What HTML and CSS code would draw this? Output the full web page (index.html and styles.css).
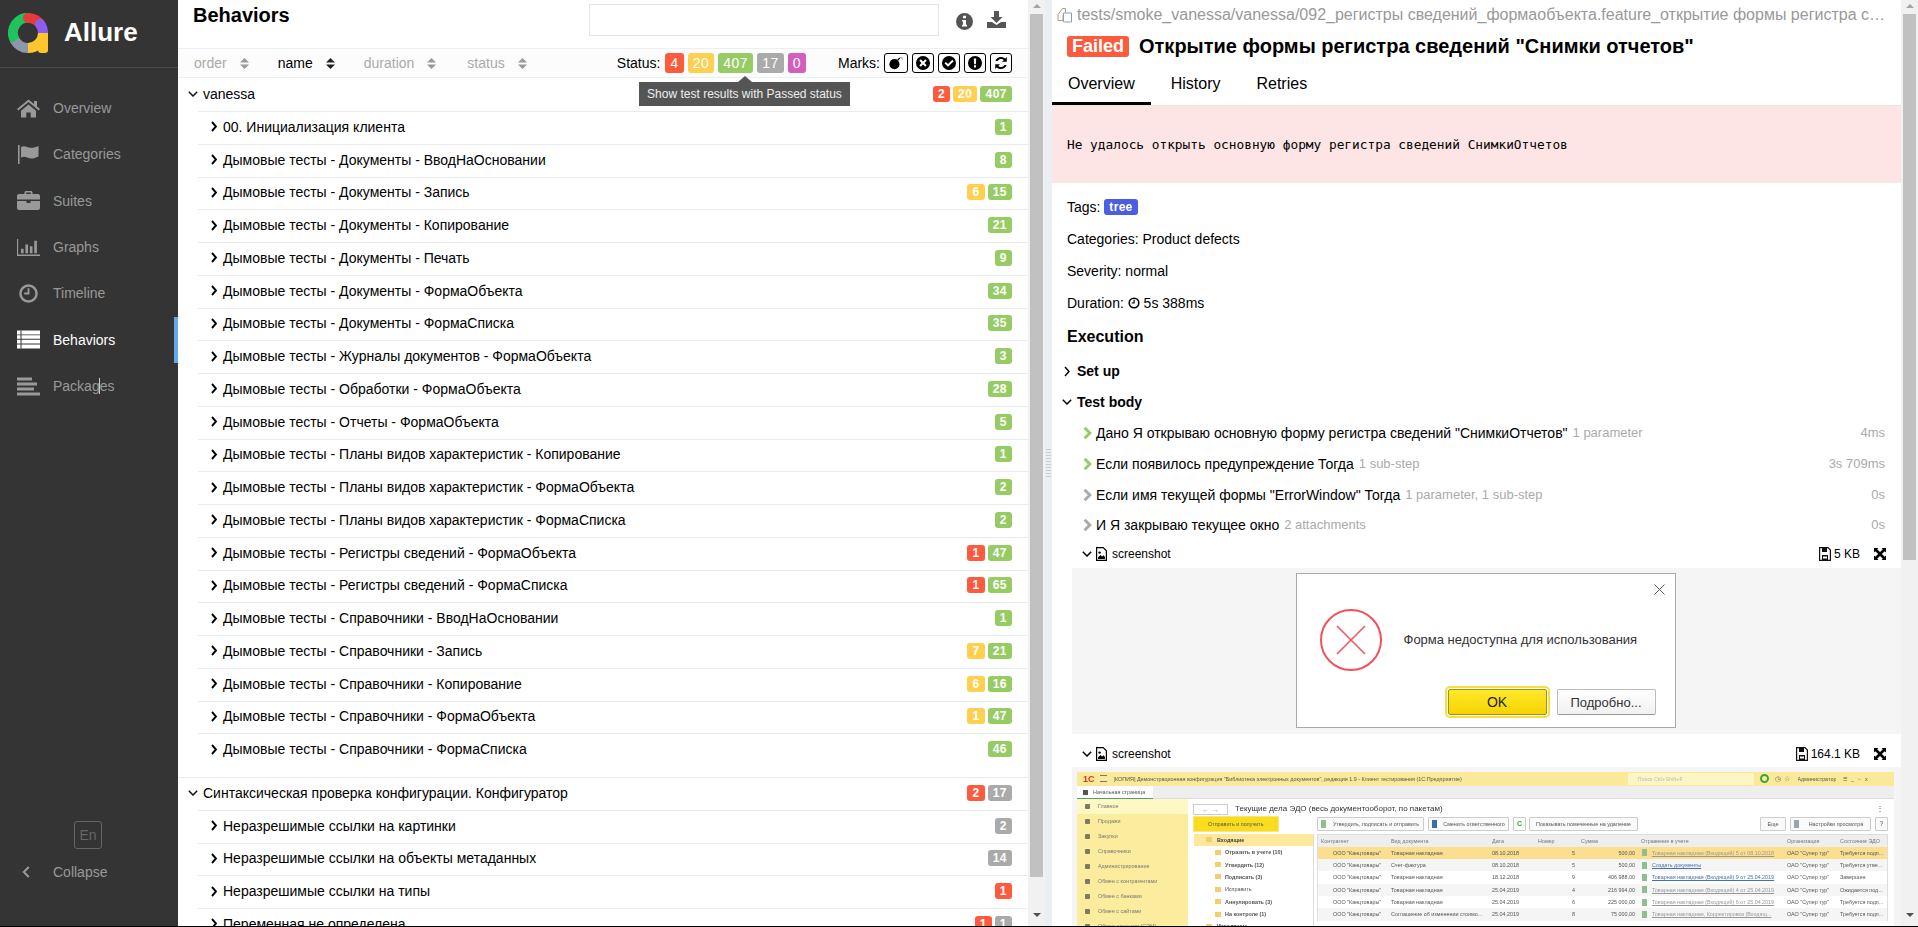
FILE: index.html
```html
<!doctype html>
<html>
<head>
    <meta charset="utf-8">
    <title>Allure Report - Behaviors</title>
    <link rel="stylesheet" href="styles.css">
</head>
<body>
<svg class="defs">
    <symbol id="ch-r" viewBox="0 0 6 11"><path d="M1 1l4 4.5L1 10" fill="none" stroke="currentColor"/></symbol>
    <symbol id="ch-d" viewBox="0 0 10 6"><path d="M.8 .8L5 5l4.2-4.2" fill="none" stroke="currentColor" stroke-width="1.5"/></symbol>
    <symbol id="step" viewBox="0 0 9 12"><path d="M1.6 .8L6.8 6l-5.2 5.2" fill="none" stroke="currentColor" stroke-width="3"/></symbol>
    <symbol id="sort" viewBox="0 0 9 11"><path d="M4.5 0L9 4.4H0zM0 6.6h9L4.5 11z"/></symbol>
    <symbol id="file-img" viewBox="0 0 11 14"><path d="M.6 .6h6.6l3.2 3.2v9.6H.6z" fill="#fff" stroke="#000" stroke-width="1.2"/><path d="M2 12v-1.5l2.4-2.6 1.6 1.6 1.6-1.2L9 10v2z"/><circle cx="3.6" cy="5.6" r="1.2"/></symbol>
    <symbol id="save" viewBox="0 0 12 14"><path d="M.6 .6h8.4l2.4 2.4v10.4H.6z" fill="#fff" stroke="#111" stroke-width="1.2"/><path d="M3 1h5v4H3zM3 8h6v5H3z" fill="#111"/><path d="M4 9.500h4v2H4z" fill="#fff"/></symbol>
    <symbol id="expand" viewBox="0 0 12 12"><path d="M0 0h4.500L3.200 1.300 6 4.100 8.800 1.300 7.500 0H12v4.500L10.700 3.200 7.900 6l2.800 2.800L12 7.500V12H7.500l1.300-1.300L6 7.900l-2.800 2.800L4.500 12H0V7.500l1.300 1.300L4.100 6 1.300 3.200 0 4.500z"/></symbol>
</svg>

<div class="app">
    <nav class="side">
        <div class="brand">
            <svg class="logo" viewBox="0 0 40 40" fill="none" stroke-width="10">
                <path d="M20 35A15 15 0 0 1 7 27.500" stroke="#8d97aa" stroke-linecap="round"/>
                <path d="M7 27.500A15 15 0 0 1 22 5" stroke="#1fc25c"/>
                <path d="M20 5A15 15 0 0 1 33 12.500" stroke="#e53b3b" stroke-linecap="round"/>
                <path d="M32 11A15 15 0 0 1 35 20" stroke="#8e5cf0" stroke-linecap="round"/>
                <path d="M35 20A15 15 0 0 1 20 35" stroke="#ffc52c"/>
                <rect x="30" y="20" width="10" height="20" rx="3" fill="#ffc52c"/>
            </svg>
            <span class="brand-name">Allure</span>
        </div>
        <ul class="menu">
            <li class="menu-item">
                <svg class="menu-icon" viewBox="0 0 23 18"><path d="M11.500 0L17 4.500V1.500h3v5.500l3 2.600-1.300 1.400-10.200-8.600L1.300 11 0 9.600z"/><path d="M4 11.200l7.500-6.300 7.500 6.300V18h-5.300v-5h-4.400v5H4z"/></svg>
                Overview
            </li>
            <li class="menu-item">
                <svg class="menu-icon" viewBox="0 0 23 19"><path d="M1 0h1.600v19H1z"/><path d="M4 2c4-2.200 6 .6 9.500 .8 3 .2 5-.6 8-1.800v10.500c-3 1.400-5 2.200-8 2-3.500-.2-5.500-3-9.500-.8z"/></svg>
                Categories
            </li>
            <li class="menu-item">
                <svg class="menu-icon" viewBox="0 0 23 19"><path d="M7.500 3V1.500C7.500.6 8.100 0 9 0h5c.9 0 1.500.6 1.500 1.500V3H21c1.100 0 2 .9 2 2v3.600H0V5c0-1.100.9-2 2-2zm1.700 0h4.600V1.600H9.200z"/><path d="M0 10h9.500v2h4v-2H23v7c0 1.100-.9 2-2 2H2c-1.100 0-2-.9-2-2z"/></svg>
                Suites
            </li>
            <li class="menu-item">
                <svg class="menu-icon" viewBox="0 0 26 19"><path d="M0 0h1.300v17.500H26V19H0z"/><path d="M4.500 11h3v5h-3zM9.500 6h3v10h-3zM14.500 8h3v8h-3zM19.500 2h3v14h-3z"/></svg>
                Graphs
            </li>
            <li class="menu-item">
                <svg class="menu-icon" viewBox="0 0 20 20"><circle cx="10" cy="10" r="8.500" fill="none" stroke="currentColor" stroke-width="2.600"/><path d="M9 4.500h2V11H5.500V9H9z"/></svg>
                Timeline
            </li>
            <li class="menu-item menu-item-active">
                <svg class="menu-icon" viewBox="0 0 23 18"><path d="M0 0h23v4H0zM0 4.800h23v3.500H0zM0 9.200h23v3.800H0zM0 14h23v4H0z"/><path d="M3.500 0h1v18h-1z" fill="#343434"/></svg>
                Behaviors
            </li>
            <li class="menu-item">
                <svg class="menu-icon" viewBox="0 0 23 18"><path d="M0 0h15v3H0zM0 5h20v3H0zM0 10h17v3H0zM0 15h23v3H0z"/></svg>
                Packages
            </li>
        </ul>
        <span class="ibeam"></span>
        <div class="side-foot">
            <span class="lang">En</span>
            <div class="collapse">
                <svg class="collapse-arrow" viewBox="0 0 8 12"><path d="M6.800 1L1.800 6l5 5" fill="none" stroke="currentColor" stroke-width="2"/></svg>
                Collapse
            </div>
        </div>
    </nav>

    <section class="left">
        <header class="left-head">
            <h2 class="left-title">Behaviors</h2>
            <div class="search"></div>
            <svg class="info" viewBox="0 0 17 17"><path fill-rule="evenodd" d="M8.500 0a8.500 8.500 0 1 1 0 17 8.500 8.500 0 0 1 0-17zM7 2.800v2.400h3V2.800zM6 7v1.600h1v3.200H6v1.800h5v-1.800h-1V7z"/></svg>
            <svg class="download" viewBox="0 0 19 17"><path d="M7 0h5v6h3.500l-6 6-6-6H7z"/><path d="M0 11h5l4.500 3 4.500-3h5v6H0z"/></svg>
        </header>
        <div class="toolbar">
            <span class="sort">order<svg><use href="#sort"/></svg></span>
            <span class="sort sort-on">name<svg><use href="#sort"/></svg></span>
            <span class="sort">duration<svg><use href="#sort"/></svg></span>
            <span class="sort sort-last">status<svg><use href="#sort"/></svg></span>
            <div class="filters">
                <span>Status:</span>
                <span class="pill red">4</span>
                <span class="pill yellow">20</span>
                <span class="pill green">407</span>
                <span class="pill gray">17</span>
                <span class="pill pink">0</span>
                <span class="marks-label">Marks:</span>
                <span class="mark mark-wide"><svg viewBox="0 0 18 16"><circle cx="7" cy="9.500" r="6.500"/><path d="M11 4.500l3-3" stroke="#000" stroke-width="1.500"/><path d="M14 1h3v3" fill="none" stroke="#999"/></svg></span>
                <span class="mark"><svg viewBox="0 0 14 14"><path fill-rule="evenodd" d="M7 0a7 7 0 1 1 0 14A7 7 0 0 1 7 0zM4.800 3.300L3.300 4.800 5.500 7 3.300 9.200l1.500 1.500L7 8.500l2.200 2.200 1.500-1.500L8.500 7l2.200-2.200-1.500-1.500L7 5.500z"/></svg></span>
                <span class="mark"><svg viewBox="0 0 14 14"><path fill-rule="evenodd" d="M7 0a7 7 0 1 1 0 14A7 7 0 0 1 7 0zM10.300 3.800L6 8 3.900 5.900 2.500 7.300 6 10.800l5.700-5.600z"/></svg></span>
                <span class="mark"><svg viewBox="0 0 14 14"><path fill-rule="evenodd" d="M7 0a7 7 0 1 1 0 14A7 7 0 0 1 7 0zM5.800 2.500l.3 5.700h1.800l.3-5.700zM6 9.300v2.200h2V9.300z"/></svg></span>
                <span class="mark"><svg viewBox="0 0 14 14"><path d="M12.800 1v4.800H8l1.800-1.800C8 2.400 5 2.600 3.600 5L1.400 5C2.800.8 7.900-.4 11.200 2.600z"/><path d="M1.200 13V8.200H6L4.200 10c1.800 1.600 4.800 1.400 6.200-1l2.200 0c-1.400 4.200-6.500 5.400-9.800 2.400z"/></svg></span>
            </div>
            <div class="tip">Show test results with Passed status</div>
        </div>

        <div class="tree">
            <div class="group">
                <svg class="group-arrow"><use href="#ch-d"/></svg>
                <span class="name">vanessa</span>
                <span class="count red">2</span><span class="count yellow">20</span><span class="count green">407</span>
            </div>
            <div class="row"><svg class="row-arrow"><use href="#ch-r"/></svg><span class="name">00. Инициализация клиента</span><span class="count green">1</span></div>
            <div class="row"><svg class="row-arrow"><use href="#ch-r"/></svg><span class="name">Дымовые тесты - Документы - ВводНаОсновании</span><span class="count green">8</span></div>
            <div class="row"><svg class="row-arrow"><use href="#ch-r"/></svg><span class="name">Дымовые тесты - Документы - Запись</span><span class="count yellow">6</span><span class="count green">15</span></div>
            <div class="row"><svg class="row-arrow"><use href="#ch-r"/></svg><span class="name">Дымовые тесты - Документы - Копирование</span><span class="count green">21</span></div>
            <div class="row"><svg class="row-arrow"><use href="#ch-r"/></svg><span class="name">Дымовые тесты - Документы - Печать</span><span class="count green">9</span></div>
            <div class="row"><svg class="row-arrow"><use href="#ch-r"/></svg><span class="name">Дымовые тесты - Документы - ФормаОбъекта</span><span class="count green">34</span></div>
            <div class="row"><svg class="row-arrow"><use href="#ch-r"/></svg><span class="name">Дымовые тесты - Документы - ФормаСписка</span><span class="count green">35</span></div>
            <div class="row"><svg class="row-arrow"><use href="#ch-r"/></svg><span class="name">Дымовые тесты - Журналы документов - ФормаОбъекта</span><span class="count green">3</span></div>
            <div class="row"><svg class="row-arrow"><use href="#ch-r"/></svg><span class="name">Дымовые тесты - Обработки - ФормаОбъекта</span><span class="count green">28</span></div>
            <div class="row"><svg class="row-arrow"><use href="#ch-r"/></svg><span class="name">Дымовые тесты - Отчеты - ФормаОбъекта</span><span class="count green">5</span></div>
            <div class="row"><svg class="row-arrow"><use href="#ch-r"/></svg><span class="name">Дымовые тесты - Планы видов характеристик - Копирование</span><span class="count green">1</span></div>
            <div class="row"><svg class="row-arrow"><use href="#ch-r"/></svg><span class="name">Дымовые тесты - Планы видов характеристик - ФормаОбъекта</span><span class="count green">2</span></div>
            <div class="row"><svg class="row-arrow"><use href="#ch-r"/></svg><span class="name">Дымовые тесты - Планы видов характеристик - ФормаСписка</span><span class="count green">2</span></div>
            <div class="row"><svg class="row-arrow"><use href="#ch-r"/></svg><span class="name">Дымовые тесты - Регистры сведений - ФормаОбъекта</span><span class="count red">1</span><span class="count green">47</span></div>
            <div class="row"><svg class="row-arrow"><use href="#ch-r"/></svg><span class="name">Дымовые тесты - Регистры сведений - ФормаСписка</span><span class="count red">1</span><span class="count green">65</span></div>
            <div class="row"><svg class="row-arrow"><use href="#ch-r"/></svg><span class="name">Дымовые тесты - Справочники - ВводНаОсновании</span><span class="count green">1</span></div>
            <div class="row"><svg class="row-arrow"><use href="#ch-r"/></svg><span class="name">Дымовые тесты - Справочники - Запись</span><span class="count yellow">7</span><span class="count green">21</span></div>
            <div class="row"><svg class="row-arrow"><use href="#ch-r"/></svg><span class="name">Дымовые тесты - Справочники - Копирование</span><span class="count yellow">6</span><span class="count green">16</span></div>
            <div class="row"><svg class="row-arrow"><use href="#ch-r"/></svg><span class="name">Дымовые тесты - Справочники - ФормаОбъекта</span><span class="count yellow">1</span><span class="count green">47</span></div>
            <div class="row"><svg class="row-arrow"><use href="#ch-r"/></svg><span class="name">Дымовые тесты - Справочники - ФормаСписка</span><span class="count green">46</span></div>

            <div class="group group-next">
                <svg class="group-arrow"><use href="#ch-d"/></svg>
                <span class="name">Синтаксическая проверка конфигурации. Конфигуратор</span>
                <span class="count red">2</span><span class="count gray">17</span>
            </div>
            <div class="row"><svg class="row-arrow"><use href="#ch-r"/></svg><span class="name">Неразрешимые ссылки на картинки</span><span class="count gray">2</span></div>
            <div class="row"><svg class="row-arrow"><use href="#ch-r"/></svg><span class="name">Неразрешимые ссылки на объекты метаданных</span><span class="count gray">14</span></div>
            <div class="row"><svg class="row-arrow"><use href="#ch-r"/></svg><span class="name">Неразрешимые ссылки на типы</span><span class="count red">1</span></div>
            <div class="row"><svg class="row-arrow"><use href="#ch-r"/></svg><span class="name">Переменная не определена</span><span class="count red">1</span><span class="count gray">1</span></div>
        </div>
    </section>

    <div class="bar bar-left">
        <span class="bar-up"></span>
        <span class="thumb thumb-left"></span>
        <span class="bar-down"></span>
    </div>
    <div class="gutter"><span class="grip"></span></div>

    <section class="right">
        <div class="path">
            <svg class="path-icon" viewBox="0 0 16 16"><path d="M1 7.500L5.500 1.500H8.500V5.500L6 8.500V13.500H1z" fill="none" stroke="#b49a86"/><path d="M6.500 6H14.500V15H6.500z" fill="#fff" stroke="#8f9db5"/></svg>
            <span class="path-text">tests/smoke_vanessa/vanessa/092_регистры сведений_формаобъекта.feature_открытие формы регистра сведений "снимки отчетов"</span>
        </div>
        <div class="title-row">
            <span class="failed">Failed</span>
            <h2 class="title">Открытие формы регистра сведений "Снимки отчетов"</h2>
        </div>
        <div class="tabs">
            <span class="tab tab-on">Overview</span>
            <span class="tab">History</span>
            <span class="tab">Retries</span>
        </div>
        <div class="error">Не удалось открыть основную форму регистра сведений СнимкиОтчетов</div>

        <p class="meta meta-first">Tags: <span class="tag">tree</span></p>
        <p class="meta">Categories: Product defects</p>
        <p class="meta">Severity: normal</p>
        <p class="meta">Duration: <svg class="clock" viewBox="0 0 12 12"><circle cx="6" cy="6" r="4.800" fill="none" stroke="#000" stroke-width="1.600"/><path d="M5.500 2.800h1.200v3.800H3.600V5.500h1.900z"/></svg> 5s 388ms</p>
        <h3 class="exec">Execution</h3>

        <div class="stage"><svg class="stage-r"><use href="#ch-r"/></svg>Set up</div>
        <div class="stage stage-open"><svg class="stage-d"><use href="#ch-d"/></svg>Test body</div>

        <div class="step"><svg class="step-arrow step-ok"><use href="#step"/></svg><span>Дано Я открываю основную форму регистра сведений "СнимкиОтчетов"</span><span class="step-meta">1 parameter</span><span class="step-time">4ms</span></div>
        <div class="step"><svg class="step-arrow step-ok"><use href="#step"/></svg><span>Если появилось предупреждение Тогда</span><span class="step-meta">1 sub-step</span><span class="step-time">3s 709ms</span></div>
        <div class="step"><svg class="step-arrow"><use href="#step"/></svg><span>Если имя текущей формы "ErrorWindow" Тогда</span><span class="step-meta">1 parameter, 1 sub-step</span><span class="step-time">0s</span></div>
        <div class="step"><svg class="step-arrow"><use href="#step"/></svg><span>И Я закрываю текущее окно</span><span class="step-meta">2 attachments</span><span class="step-time">0s</span></div>

        <div class="attach">
            <svg class="attach-arrow"><use href="#ch-d"/></svg>
            <svg class="attach-file"><use href="#file-img"/></svg>
            <span>screenshot</span>
            <svg class="attach-save"><use href="#save"/></svg>
            <span class="attach-size">5 KB</span>
            <svg class="attach-expand"><use href="#expand"/></svg>
        </div>
        <div class="shot">
            <div class="dialog">
                <svg class="dialog-x" viewBox="0 0 11 11"><path d="M.5 .5l10 10M10.500 .5l-10 10" stroke="#555" fill="none"/></svg>
                <div class="dialog-body">
                    <svg class="dialog-err" viewBox="0 0 62 62"><circle cx="31" cy="31" r="30" fill="none" stroke="#f2505c" stroke-width="2"/><path d="M17 17l28 28M45 17L17 45" stroke="#f2505c" stroke-width="1.500"/></svg>
                    <span>Форма недоступна для использования</span>
                </div>
                <div class="dialog-btns">
                    <span class="btn-ok">OK</span>
                    <span class="btn-more">Подробно...</span>
                </div>
            </div>
        </div>

        <div class="attach attach-next">
            <svg class="attach-arrow"><use href="#ch-d"/></svg>
            <svg class="attach-file"><use href="#file-img"/></svg>
            <span>screenshot</span>
            <svg class="attach-save"><use href="#save"/></svg>
            <span class="attach-size">164.1 KB</span>
            <svg class="attach-expand"><use href="#expand"/></svg>
        </div>
        <div class="shot shot-app">
            <div class="app1c">
                <div class="c-top">
                    <b class="c-logo">1С</b>
                    <span class="c-burger"></span>
                    <span class="c-caption">[КОПИЯ] Демонстрационная конфигурация "Библиотека электронных документов", редакция 1.9 - Клиент тестирования (1С:Предприятие)</span>
                    <span class="c-search">Поиск Ctrl+Shift+F</span>
                    <span class="c-dot"></span>
                    <span class="c-glyphs">◷ &nbsp;☆</span>
                    <span class="c-user">Администратор</span>
                    <span class="c-win">☰ &nbsp; _ &nbsp; ▫ &nbsp; x</span>
                </div>
                <div class="c-tabs"><span class="c-tab">Начальная страница</span></div>
                <div class="c-body">
                    <div class="c-side">
                        <div class="c-side-item c-side-on">Главное</div>
                        <div class="c-side-item">Продажи</div>
                        <div class="c-side-item">Закупки</div>
                        <div class="c-side-item">Справочники</div>
                        <div class="c-side-item">Администрирование</div>
                        <div class="c-side-item">Обмен с контрагентами</div>
                        <div class="c-side-item">Обмен с банками</div>
                        <div class="c-side-item">Обмен с сайтами</div>
                        <div class="c-side-item">Обмен данными (СЭМ)</div>
                    </div>
                    <div class="c-main">
                        <div class="c-head">
                            <span class="c-nav">← &nbsp;→</span>
                            <span class="c-title">Текущие дела ЭДО (весь документооборот, по пакетам)</span>
                            <span class="c-more">⋮</span>
                        </div>
                        <div class="c-split">
                            <div class="c-left">
                                <span class="c-send">Отправить и получить</span>
                                <div class="c-folders">
                                    <div class="c-folder c-folder-top c-folder-on">Входящие</div>
                                    <div class="c-folder">Отразить в учете (10)</div>
                                    <div class="c-folder">Утвердить (12)</div>
                                    <div class="c-folder">Подписать (3)</div>
                                    <div class="c-folder c-folder-thin">Исправить</div>
                                    <div class="c-folder">Аннулировать (3)</div>
                                    <div class="c-folder">На контроле (1)</div>
                                    <div class="c-folder c-folder-top">Исходящие</div>
                                </div>
                            </div>
                            <div class="c-right">
                                <div class="c-tools">
                                    <span class="c-tool c-tool-a">Утвердить, подписать и отправить</span>
                                    <span class="c-tool c-tool-b">Сменить ответственного</span>
                                    <span class="c-tool c-tool-c">С</span>
                                    <span class="c-tool c-tool-d">Показывать помеченные на удаление</span>
                                    <span class="c-tool c-tool-e">Еще</span>
                                    <span class="c-tool c-tool-f">Настройки просмотра</span>
                                    <span class="c-tool c-tool-g">?</span>
                                </div>
                                <div class="c-table">
                                    <div class="c-row c-row-head"><span>Контрагент</span><span>Вид документа</span><span>Дата</span><span>Номер</span><span>Сумма</span><span>Отражение в учете</span><span>Организация</span><span>Состояние ЭДО</span></div>
                                    <div class="c-row c-row-on"><span class="c-in">ООО "Канцтовары"</span><span>Товарная накладная</span><span>08.10.2018</span><span class="c-num">5</span><span class="c-num">500,00</span><a>Товарная накладная (Входящий) 5 от 08.10.2018</a><span>ОАО "Супер тур"</span><span>Требуется подп...</span></div>
                                    <div class="c-row c-row-alt"><span class="c-in">ООО "Канцтовары"</span><span>Счет-фактура</span><span>08.10.2018</span><span class="c-num">5</span><span class="c-num">500,00</span><a class="c-blue c-new">Создать документы</a><span>ОАО "Супер тур"</span><span>Требуется утве...</span></div>
                                    <div class="c-row"><span class="c-in">ООО "Канцтовары"</span><span>Товарная накладная</span><span>18.12.2018</span><span class="c-num">9</span><span class="c-num">406 988,00</span><a class="c-blue">Товарная накладная (Входящий) 9 от 25.04.2019</a><span>ОАО "Супер тур"</span><span>Завершен</span></div>
                                    <div class="c-row c-row-alt"><span class="c-in">ООО "Канцтовары"</span><span>Товарная накладная</span><span>25.04.2019</span><span class="c-num">4</span><span class="c-num">216 994,00</span><a>Товарная накладная (Входящий) 4 от 25.04.2019</a><span>ОАО "Супер тур"</span><span>Ожидается под...</span></div>
                                    <div class="c-row"><span class="c-in">ООО "Канцтовары"</span><span>Товарная накладная</span><span>25.04.2019</span><span class="c-num">6</span><span class="c-num">225 000,00</span><a>Товарная накладная (Входящий) 6 от 25.04.2019</a><span>ОАО "Супер тур"</span><span>Требуется подп...</span></div>
                                    <div class="c-row c-row-alt"><span class="c-in">ООО "Канцтовары"</span><span>Соглашение об изменении стоимо...</span><span>25.04.2019</span><span class="c-num">8</span><span class="c-num">75 000,00</span><a>Товарная накладная, Корректировка (Входящ...</a><span>ОАО "Супер тур"</span><span>Требуется подп...</span></div>
                                </div>
                            </div>
                        </div>
                    </div>
                </div>
            </div>
        </div>
    </section>

    <div class="bar bar-right">
        <span class="bar-up"></span>
        <span class="thumb thumb-right"></span>
        <span class="bar-down"></span>
    </div>
</div>
</body>
</html>
```

FILE: styles.css
```css
html, body {
    margin: 0;
    height: 927px;
    overflow: hidden;
    background: #000;
    font-family: "Liberation Sans", Arial, sans-serif;
    font-size: 14px;
    line-height: 20px;
    color: #000;
}
.defs { display: none; }
.app {
    display: flex;
    height: 926px;
    overflow: hidden;
    background: #fff;
}

/* side menu */
.side {
    position: relative;
    flex: none;
    display: flex;
    flex-direction: column;
    width: 178px;
    background: #343434;
    color: #999;
}
.brand {
    display: flex;
    align-items: center;
    height: 68px;
    padding-left: 8px;
    box-sizing: border-box;
    border-bottom: 1px solid #4b4b4b;
}
.logo { width: 40px; height: 40px; margin: -1px 16px 0 0; }
.brand-name { font-size: 26px; font-weight: bold; color: #fff; margin-top: -3px; }
.menu { list-style: none; margin: 17px 0 0; padding: 0; }
.menu-item {
    display: flex;
    align-items: center;
    height: 46.33px;
    padding-left: 17px;
    box-sizing: border-box;
}
.menu-icon { width: 23px; height: 19px; margin-right: 13px; fill: #999; color: #999; }
.menu-item-active { color: #fff; border-right: 4px solid #63aaeb; }
.menu-item-active .menu-icon { fill: #fff; }
.ibeam {
    position: absolute;
    left: 99px;
    top: 378px;
    width: 1px;
    height: 16px;
    background: #ccc;
}
.side-foot { margin-top: auto; padding-bottom: 44px; }
.lang {
    display: block;
    width: 28px;
    height: 28px;
    margin-left: 74px;
    box-sizing: border-box;
    border: 1px solid #666;
    border-radius: 3px;
    color: #666;
    text-align: center;
    line-height: 26px;
}
.collapse { display: flex; align-items: center; margin-top: 13px; padding-left: 22px; }
.collapse-arrow { width: 8px; height: 12px; margin-right: 23px; }

/* behaviors pane */
.left { flex: none; width: 850px; overflow: hidden; }
.left-head { display: flex; height: 48px; box-sizing: border-box; padding: 4px 22px 0 15px; }
.left-title { margin: -4px 0 0; font-size: 20px; line-height: 30px; font-weight: bold; }
.search {
    width: 350px;
    height: 32px;
    margin-left: auto;
    box-sizing: border-box;
    border: 1px solid #e3e6e8;
}
.info { width: 17px; height: 17px; margin: 9px 0 0 17px; fill: #555; }
.download { width: 19px; height: 17px; margin: 7px 0 0 14px; fill: #555; }

.toolbar {
    position: relative;
    display: flex;
    align-items: center;
    height: 30px;
    box-sizing: border-box;
    padding-left: 16px;
    background: #fcfcfc;
    border-top: 1px solid #eceff2;
    border-bottom: 1px solid #eceff2;
}
.sort { display: flex; align-items: center; margin-right: 29px; color: #aaa; }
.sort svg { width: 9px; height: 11px; margin-left: 13px; fill: #999; }
.sort-on { color: #000; }
.sort-on svg { fill: #222; }
.sort-last { margin-left: 2px; }
.filters { display: flex; align-items: center; margin-left: auto; padding-right: 16px; }
.pill {
    height: 20px;
    margin-left: 4px;
    padding: 0 5px;
    border-radius: 3px;
    color: #fff;
    letter-spacing: .5px;
    line-height: 20px;
}
.filters .red { margin-left: 5px; }
.marks-label { margin: 0 4px 0 32px; }
.mark {
    display: flex;
    align-items: center;
    justify-content: center;
    width: 22px;
    height: 20px;
    margin-left: 4px;
    box-sizing: border-box;
    border: 1px solid #000;
    border-radius: 3px;
}
.mark-wide { width: 24px; margin-left: 0; }
.mark svg { width: 14px; height: 14px; }
.tip {
    position: absolute;
    left: 461px;
    top: 33px;
    width: 211px;
    height: 24px;
    background: #555;
    color: #eee;
    font-size: 12px;
    line-height: 24px;
    text-align: center;
}
.tip::before {
    content: "";
    position: absolute;
    left: 99px;
    top: -6px;
    border-left: 7px solid transparent;
    border-right: 7px solid transparent;
    border-bottom: 6px solid #555;
}
.red { background: #fd5a3e; }
.yellow { background: #ffd050; }
.green { background: #97cc64; }
.gray { background: #aaa; }
.pink { background: #d35ebe; }

.group, .row { display: flex; align-items: center; box-sizing: border-box; padding-right: 16px; padding-bottom: 2px; }
.group { height: 33px; padding-left: 10px; }
.group-next { height: 32.75px; margin-top: 11px; border-top: 1px solid #e9ecef; }
.group-arrow { width: 10px; height: 6px; margin-right: 5px; color: #111; }
.row {
    height: 32.75px;
    margin-left: 20px;
    padding-left: 13px;
    border-top: 1px solid #e9ecef;
}
.row-arrow { width: 6px; height: 11px; margin-right: 6px; color: #000; stroke-width: 1.9; }
.name { margin-right: auto; }
.count {
    height: 16px;
    margin-left: 3px;
    padding: 0 5px;
    border-radius: 3px;
    color: #fff;
    font-size: 12px;
    font-weight: bold;
    letter-spacing: .5px;
    line-height: 16px;
}

/* scroll bars */
.bar {
    flex: none;
    display: flex;
    flex-direction: column;
    align-items: center;
    width: 17px;
    background: #f1f1f1;
}
.bar-up, .bar-down { flex: none; height: 14px; width: 0; position: relative; }
.bar-up::after, .bar-down::after {
    content: "";
    position: absolute;
    left: -4px;
    border-left: 4px solid transparent;
    border-right: 4px solid transparent;
}
.bar-up::after { top: 4px; border-bottom: 4px solid #a3a3a3; }
.bar-down::after { top: 3px; border-top: 4px solid #505050; }
.bar-down { margin-top: auto; margin-bottom: 2px; }
.thumb { flex: none; width: 13px; background: #c1c1c1; }
.thumb-left { height: 863px; }
.thumb-right { height: 546px; }
.gutter {
    flex: none;
    display: flex;
    align-items: center;
    justify-content: center;
    width: 7px;
    background: #ebeff3;
}
.grip {
    width: 5px;
    height: 30px;
    background: radial-gradient(circle, #c4c8cc 0.8px, transparent 1px) 0 0 / 2.500px 3px;
}

/* test result pane */
.right { flex: none; width: 849px; overflow: hidden; }
.path { display: flex; align-items: center; height: 30px; padding: 0 10px 0 5px; color: #999; font-size: 16px; }
.path-icon { flex: none; width: 16px; height: 16px; margin-right: 4px; }
.path-text { white-space: nowrap; overflow: hidden; text-overflow: ellipsis; }
.title-row { display: flex; align-items: center; height: 32px; padding-left: 15px; }
.failed {
    height: 21px;
    margin-right: 10px;
    padding: 0 5px;
    border-radius: 3px;
    background: #fd5a3e;
    color: #fff;
    font-size: 18px;
    font-weight: bold;
    line-height: 21px;
}
.title { margin: 0; font-size: 20px; line-height: 24px; font-weight: bold; }
.tabs { display: flex; height: 44px; box-sizing: border-box; border-bottom: 1px solid #e5e5e5; }
.tab { height: 43px; margin-right: 4px; padding: 0 16px; box-sizing: border-box; font-size: 16px; line-height: 44px; }
.tab-on { border-bottom: 3px solid #000; }
.error {
    display: flex;
    align-items: center;
    height: 77px;
    padding-left: 15px;
    background: #fde5e5;
    font-family: "DejaVu Sans Mono", "Liberation Mono", monospace;
    font-size: 12.8px;
}
.meta { margin: 12px 0 0 15px; height: 20px; }
.meta-first { margin-top: 14px; }
.tag {
    display: inline-block;
    height: 16px;
    padding: 0 5px;
    border-radius: 3px;
    background: #4a5ee0;
    color: #fff;
    font-size: 12px;
    font-weight: bold;
    letter-spacing: .3px;
    line-height: 16px;
    vertical-align: 1px;
}
.clock { width: 12px; height: 12px; vertical-align: -1px; }
.exec { margin: 14px 0 0 15px; font-size: 16px; line-height: 20px; font-weight: bold; }
.stage { display: flex; align-items: center; height: 20px; margin-top: 14px; padding-left: 10px; font-weight: bold; }
.stage-open { margin-top: 11px; }
.stage-r { width: 6px; height: 11px; padding: 0 2px; margin-right: 5px; stroke-width: 1.4; }
.stage-d { width: 10px; height: 6px; margin-right: 5px; }
.stage-open + .step { margin-top: 6px; }
.step {
    display: flex;
    align-items: center;
    height: 30.7px;
    padding: 0 16px 0 31px;
}
.step-arrow { flex: none; width: 9px; height: 12px; margin-right: 4px; color: #aaa; }
.step-ok { color: #97cc64; }
.step-meta { margin-left: 5px; font-size: 13px; color: #aaa; }
.step-time { margin-left: auto; font-size: 13px; color: #aaa; }
.attach {
    display: flex;
    align-items: center;
    height: 27px;
    padding: 0 15px 0 30px;
    font-size: 12px;
}
.attach-arrow { width: 10px; height: 6px; margin-right: 4px; }
.attach-file { width: 11px; height: 14px; margin-right: 5px; }
.attach-save { width: 12px; height: 14px; margin: 0 3px 0 auto; }
.attach-expand { width: 12px; height: 12px; margin-left: 14px; }
.attach-next { height: 33px; padding-top: 7px; box-sizing: border-box; }
.shot { margin-left: 20px; padding: 5px 2px 0 0; height: 166px; box-sizing: border-box; background: #f5f5f5; }

/* first attachment: the error dialog */
.dialog {
    display: flex;
    flex-direction: column;
    position: relative;
    width: 380px;
    height: 155px;
    margin: 0 auto;
    box-sizing: border-box;
    background: #fff;
    border: 1px solid #aaa;
    font-size: 13px;
    color: #333;
}
.dialog-x { position: absolute; right: 10px; top: 10px; width: 11px; height: 11px; }
.dialog-body { display: flex; align-items: center; height: 112px; padding: 20px 0 0 23px; box-sizing: border-box; }
.dialog-err { width: 62px; height: 62px; margin-right: 22px; }
.dialog-btns { display: flex; justify-content: flex-end; padding-right: 19px; margin-top: 3px; }
.btn-ok, .btn-more {
    width: 99px;
    height: 26px;
    box-sizing: border-box;
    text-align: center;
    line-height: 25px;
    border-radius: 2px;
}
.btn-ok {
    margin-right: 10px;
    background: linear-gradient(#ffe92c, #f5d300);
    border: 1px solid #a99200;
    outline: 2px solid #f8dc45;
    outline-offset: 1px;
    color: #222;
    font-size: 14px;
}
.btn-more {
    background: linear-gradient(#fff, #f1f1f1);
    border: 1px solid #bbb;
    border-bottom-color: #999;
}

/* second attachment: the 1C window */
.shot-app { padding: 5px 7px 0 5px; height: 200px; }
.app1c {
    height: 194px;
    background: #fff;
    font-size: 5.4px;
    line-height: 12px;
    color: #555;
    overflow: hidden;
    filter: blur(.25px);
}
.c-top {
    display: flex;
    align-items: center;
    height: 14px;
    padding-left: 6px;
    background: #f9e998;
    white-space: nowrap;
}
.c-logo { color: #d9381e; font-size: 9px; margin-right: 5px; }
.c-burger { width: 7px; height: 5px; margin-right: 7px; border-top: 1px solid #777; border-bottom: 1px solid #777; }
.c-caption { width: 514px; overflow: hidden; }
.c-search { width: 126px; height: 12px; background: #fdf5c4; color: #bbb; padding-left: 10px; box-sizing: border-box; }
.c-dot { width: 9px; height: 9px; margin: 0 6px; border: 2px solid #3aa53a; border-radius: 50%; box-sizing: border-box; }
.c-glyphs { width: 23px; font-size: 7px; color: #666; }
.c-user { width: 38px; overflow: hidden; }
.c-win { margin-left: 7px; }
.c-tabs { height: 13px; background: #eee; border-bottom: 1px solid #ddd; box-sizing: border-box; }
.c-tab {
    position: relative;
    display: block;
    width: 76px;
    height: 13px;
    padding-left: 16px;
    box-sizing: border-box;
    background: #fff;
    border-bottom: 1px solid #49a36e;
    white-space: nowrap;
    overflow: hidden;
}
.c-tab::before {
    content: "";
    position: absolute;
    left: 6px;
    top: 4px;
    width: 5px;
    height: 5px;
    background: #555;
}
.c-body { display: flex; }
.c-side { flex: none; width: 111px; height: 140px; background: #fbed9d; }
.c-side-item { position: relative; height: 15px; padding-left: 21px; line-height: 15px; color: #777; }
.c-side-item::before {
    content: "";
    position: absolute;
    left: 8px;
    top: 5px;
    width: 5px;
    height: 5px;
    border-radius: 1px;
    background: #7d7a60;
}
.c-side-on { background: #fff8c4; }
.c-main { flex: 1; min-width: 0; padding: 3px 6px 0 5px; }
.c-head { display: flex; align-items: center; height: 15px; }
.c-nav { width: 35px; height: 11px; margin-right: 7px; border: 1px solid #ccc; box-sizing: border-box; line-height: 9px; text-align: center; color: #888; font-size: 6.5px; }
.c-title { font-size: 8px; color: #333; }
.c-more { margin-left: auto; padding-right: 4px; font-size: 8px; }
.c-split { display: flex; }
.c-left { flex: none; width: 124px; }
.c-send {
    display: block;
    width: 84px;
    height: 14px;
    background: #f9dc1e;
    outline: 1px solid #fbe47a;
    box-sizing: border-box;
    padding-left: 14px;
    color: #555;
    line-height: 14px;
    white-space: nowrap;
    margin-bottom: 3px;
    margin-left: 1px;
}
.c-folders { width: 119px; margin-left: 1px; border-right: 1px solid #ddd; }
.c-folder { height: 12.4px; padding-left: 31px; line-height: 12.4px; font-weight: bold; position: relative; }
.c-folder::before {
    content: "";
    position: absolute;
    left: 21px;
    top: 3.500px;
    width: 6px;
    height: 5px;
    background: #f3cf6b;
}
.c-folder-thin { font-weight: normal; }
.c-folder-top { padding-left: 23px; color: #444; }
.c-folder-top::before { left: 12px; }
.c-folder-on { background: #ffe79c; }
.c-right { flex: 1; min-width: 0; }
.c-tools { display: flex; height: 14px; margin-bottom: 3px; }
.c-tool {
    position: relative;
    display: block;
    height: 14px;
    box-sizing: border-box;
    border: 1px solid #ccc;
    border-radius: 1px;
    background: #fafafa;
    line-height: 12px;
    text-align: center;
    white-space: nowrap;
    overflow: hidden;
    margin-right: 4px;
}
.c-tool-a, .c-tool-b, .c-tool-f { padding-left: 11px; }
.c-tool-a::before, .c-tool-b::before, .c-tool-f::before {
    content: "";
    position: absolute;
    left: 3px;
    top: 2px;
    width: 5px;
    height: 8px;
    background: #8fbf8f;
}
.c-tool-b::before { background: #3b6ea8; }
.c-tool-f::before { background: #9aa4ad; }
.c-tool-a { width: 107px; }
.c-tool-b { width: 81px; }
.c-tool-c { width: 13px; color: #3aa53a; font-weight: bold; margin-right: 3px; font-size: 7px; }
.c-tool-d { width: 109px; margin-right: 122px; }
.c-tool-e { width: 26px; }
.c-tool-f { width: 81px; }
.c-tool-g { width: 13px; margin-right: 0; font-size: 7px; }
.c-table { border: 1px solid #ddd; border-bottom: 0; width: 571px; box-sizing: border-box; }
.c-row {
    display: grid;
    grid-template-columns: 70px 101px 46px 43px 60px 146px 53px 50px;
    height: 12.35px;
    line-height: 12.35px;
    white-space: nowrap;
}
.c-row > * { padding: 0 3px; overflow: hidden; }
.c-row-head { background: #eee; height: 12px; color: #777; }
.c-row-on { background: #fbdf8e; }
.c-row-alt { background: #f5f5f5; }
.c-row > .c-in { padding-left: 15px; }
.c-num { text-align: right; }
.c-row a { position: relative; padding-left: 14px; color: #999; text-decoration: underline; }
.c-row a::before {
    content: "";
    position: absolute;
    left: 4px;
    top: 2.500px;
    width: 5px;
    height: 7px;
    background: #8fbf8f;
}
.c-row a.c-blue { color: #4a6fb0; }
.c-row a.c-new { text-decoration: underline; }
```
